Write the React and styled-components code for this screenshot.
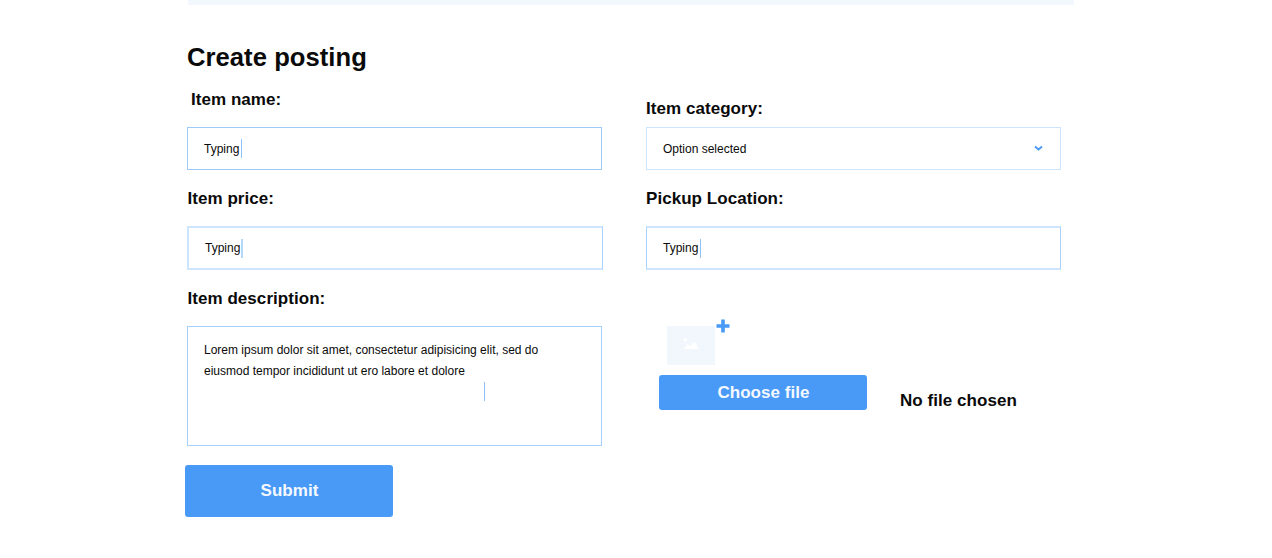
import React from "react";
import styled, { createGlobalStyle } from "styled-components";

const Global = createGlobalStyle`
  * { box-sizing: border-box; }
  body {
    margin: 0;
    background: #fff;
    color: #0a0a0a;
    font-family: "Liberation Sans", Arial, sans-serif;
  }
`;

const Page = styled.main`
  width: 887px;
  height: 558px;
  margin-left: 187px;
`;

const TopStrip = styled.div`
  height: 5px;
  margin-left: 1px;
  background: #f3f8ff;
`;

const Title = styled.h1`
  margin: 37px 0 0;
  height: 30px;
  line-height: 31px;
  font-size: 25.6px;
  font-weight: 700;
  letter-spacing: 0.05px;
  white-space: nowrap;
`;

const Columns = styled.form`
  display: grid;
  grid-template-columns: 416px 416px;
  column-gap: 43px;
`;

const Column = styled.div`
  display: flex;
  flex-direction: column;
  align-items: flex-start;
`;

const Label = styled.label`
  height: 20px;
  line-height: 22px;
  margin-top: ${(p) => p.$top}px;
  margin-left: ${(p) => p.$indent || 0}px;
  font-size: 17px;
  font-weight: 700;
  letter-spacing: 0.05px;
  white-space: nowrap;
`;

const Field = styled.div`
  display: flex;
  align-items: center;
  width: 415px;
  height: 43px;
  margin-top: ${(p) => p.$top}px;
  padding: 0 17px 0 16px;
  border: 1px solid ${(p) => p.$color};
  font-size: 12px;
`;

const SoftField = styled(Field)`
  width: ${(p) => p.$width}px;
  height: 44px;
  margin-bottom: -1px;
  border-width: 2px 1px 2px ${(p) => p.$left}px;
  border-color: #cde5fe #a6d2fd #cde5fe ${(p) => (p.$left > 1 ? "#cde5fe" : "#a6d2fd")};
`;

const Caret = styled.span`
  width: ${(p) => p.$width || 1}px;
  height: 19px;
  margin-left: ${(p) => (p.$width > 1 ? 1 : 2)}px;
  background: ${(p) => (p.$width > 1 ? "#b4d7fc" : "#8cc1fa")};
`;

const Chevron = styled.svg`
  width: 9px;
  height: 6px;
  margin-left: auto;
  transform: translateY(-0.5px);
`;

const TextArea = styled.div`
  display: flex;
  flex-direction: column;
  width: 415px;
  height: 120px;
  margin-top: 18px;
  padding: 13px 16px;
  border: 1px solid #a6d0fc;
  font-size: 12px;
  line-height: 21px;
  white-space: nowrap;
`;

const AreaCaret = styled(Caret)`
  margin: 0 0 0 280px;
`;

const Button = styled.button`
  width: 208px;
  height: ${(p) => p.$height}px;
  padding: 0 0 0 1px;
  border: 0;
  border-radius: 3px;
  background: #489af6;
  color: #f5f9ff;
  font: 700 17px/20px "Liberation Sans", Arial, sans-serif;
  letter-spacing: 0.05px;
`;

const SubmitButton = styled(Button)`
  margin: 19px 0 0 -2px;
`;

const Attachment = styled.div`
  display: flex;
  align-items: flex-start;
  margin: 50px 0 0 21px;
`;

const Thumb = styled.div`
  display: flex;
  justify-content: center;
  width: 48px;
  height: 39px;
  margin-top: 7px;
  padding-top: 11px;
  background: #f2f7fe;
`;

const PlusIcon = styled.svg`
  width: 14px;
  height: 14px;
  margin-left: 1px;
`;

const FileRow = styled.div`
  display: flex;
  align-items: flex-start;
  margin: 10px 0 0 13px;
`;

const FileStatus = styled.span`
  margin: 16px 0 0 33px;
  line-height: 20px;
  font-size: 17px;
  font-weight: 700;
  letter-spacing: 0.05px;
  white-space: nowrap;
`;

export default function App() {
  return (
    <>
      <Global />
      <Page>
        <TopStrip />
        <Title>Create posting</Title>
        <Columns>
          <Column>
            <Label $top={17} $indent={4}>Item name:</Label>
            <Field $top={18} $color="#9ccaf9">Typing<Caret /></Field>
            <Label $top={18} $indent={0.5}>Item price:</Label>
            <SoftField $top={18} $left={2} $width={416}>Typing<Caret $width={2} /></SoftField>
            <Label $top={19} $indent={0.5}>Item description:</Label>
            <TextArea>
              <span>Lorem ipsum dolor sit amet, consectetur adipisicing elit, sed do</span>
              <span>eiusmod tempor incididunt ut ero labore et dolore</span>
              <AreaCaret />
            </TextArea>
            <SubmitButton type="button" $height={52}>Submit</SubmitButton>
          </Column>
          <Column>
            <Label $top={26}>Item category:</Label>
            <Field $top={9} $color="#cce4fd">
              Option selected
              <Chevron viewBox="0 0 9 6" fill="none" stroke="#489af6" strokeWidth="1.9">
                <path d="M1 1l3.5 3L8 1" />
              </Chevron>
            </Field>
            <Label $top={18}>Pickup Location:</Label>
            <SoftField $top={18} $left={1} $width={415}>Typing<Caret /></SoftField>
            <Attachment>
              <Thumb>
                <svg width="16" height="12" viewBox="0 0 16 12" fill="#fff">
                  <circle cx="2.3" cy="2.8" r="1.7" />
                  <path d="M1 12L4.7 6.8L7 9.4L11.4 4.5L16 12Z" />
                </svg>
              </Thumb>
              <PlusIcon viewBox="0 0 14 14" stroke="#489af6" strokeWidth="3.6">
                <path d="M7 .5v13M.5 7h13" />
              </PlusIcon>
            </Attachment>
            <FileRow>
              <Button type="button" $height={35}>Choose file</Button>
              <FileStatus>No file chosen</FileStatus>
            </FileRow>
          </Column>
        </Columns>
      </Page>
    </>
  );
}
